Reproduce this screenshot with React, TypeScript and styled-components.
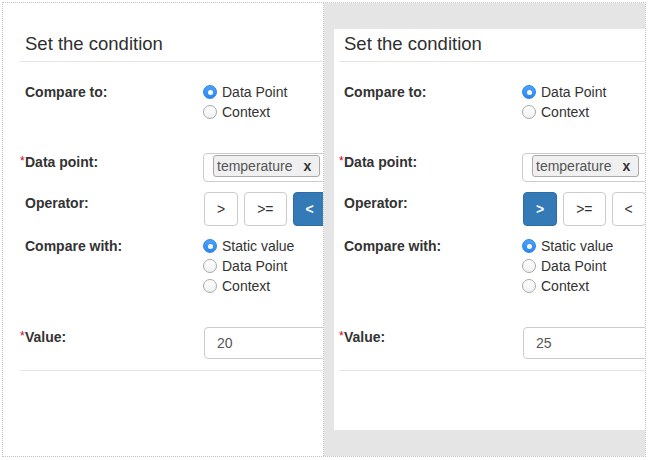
import styled, { createGlobalStyle } from "styled-components";

const GlobalStyle = createGlobalStyle`
  html, body {
    margin: 0;
    padding: 0;
    background: #ffffff;
  }

  body {
    font-family: "Liberation Sans", Arial, sans-serif;
    font-size: 14px;
    color: #333333;
  }
`;

const Frame = styled.div`
  margin: 2px 0 0 2px;
  width: 644px;
  height: 455px;
  box-sizing: border-box;
  border: 1px dotted #c4c4c4;
  display: grid;
  grid-template-columns: 321px 321px;
`;

type PaneProps = {
  $shaded?: boolean;
};

const Pane = styled.div<PaneProps>`
  box-sizing: border-box;
  overflow: hidden;
  padding: 26px 0 0 ${(p) => (p.$shaded ? 10 : 12)}px;
  background: ${(p) => (p.$shaded ? "#e5e5e5" : "#ffffff")};
  border-right: ${(p) => (p.$shaded ? "none" : "1px dotted #c4c4c4")};
`;

const Card = styled.div`
  width: 420px;
  height: 401px;
  background: #ffffff;
`;

const Header = styled.h4`
  margin: 0 5px;
  padding: 5px 5px 7px;
  font-size: 18.5px;
  line-height: 20px;
  font-weight: normal;
  color: #2f2f2f;
  border-bottom: 1px solid #e5e5e5;
`;

const Body = styled.div`
  padding: 20px 0 0 10px;
`;

type RowProps = {
  $mt?: number;
};

const Row = styled.div<RowProps>`
  display: grid;
  grid-template-columns: 178px 1fr;
  align-items: start;
  margin-top: ${(p) => p.$mt ?? 0}px;
`;

type LabelProps = {
  $pt?: number;
};

const Label = styled.label<LabelProps>`
  position: relative;
  font-weight: bold;
  line-height: 20px;
  padding-top: ${(p) => p.$pt ?? 0}px;
  color: #333333;
`;

const Required = styled.span`
  position: absolute;
  left: -5px;
  top: -1px;
  font-size: 12px;
  font-weight: normal;
  color: #d0021b;
`;

const RadioGroup = styled.div`
  display: flex;
  flex-direction: column;
`;

const RadioOption = styled.div`
  display: flex;
  align-items: center;
  gap: 5px;
  height: 20px;
  line-height: 20px;
  white-space: nowrap;
`;

type DotProps = {
  $checked?: boolean;
};

const RadioDot = styled.span<DotProps>`
  width: 14px;
  height: 14px;
  box-sizing: border-box;
  border-radius: 50%;
  display: flex;
  align-items: center;
  justify-content: center;
  background: ${(p) =>
    p.$checked ? "linear-gradient(#4da3f8, #2c86f2)" : "linear-gradient(#ffffff, #f1f1f1)"};
  border: 1px solid ${(p) => (p.$checked ? "#2d84ea" : "#a9a9a9")};

  &::after {
    content: "";
    display: ${(p) => (p.$checked ? "block" : "none")};
    width: 5px;
    height: 5px;
    border-radius: 50%;
    background: #ffffff;
  }
`;

const TagBox = styled.div`
  margin-top: 1px;
  width: 200px;
  height: 29px;
  box-sizing: border-box;
  padding: 1px 0 0 9px;
  border: 1px solid #cccccc;
  border-radius: 4px;
  background: #ffffff;
`;

const Tag = styled.span`
  display: inline-flex;
  align-items: center;
  gap: 11px;
  height: 22px;
  box-sizing: border-box;
  padding: 0 8px 0 3px;
  border: 1px solid #aaaaaa;
  border-radius: 3px;
  background: #f0f0f0;
  color: #555555;
  white-space: nowrap;
`;

const TagClose = styled.span`
  font-weight: bold;
  color: #333333;
`;

const ButtonGroup = styled.div`
  display: flex;
  gap: 6px;
  margin-left: 1px;
`;

type OpButtonProps = {
  $active?: boolean;
};

const OpButton = styled.button<OpButtonProps>`
  height: 34px;
  padding: 0 12px;
  border-radius: 4px;
  font-family: inherit;
  font-size: 14px;
  flex-shrink: 0;
  border: 1px solid ${(p) => (p.$active ? "#2e6da4" : "#cccccc")};
  background: ${(p) => (p.$active ? "#337ab7" : "#ffffff")};
  color: ${(p) => (p.$active ? "#ffffff" : "#333333")};
  font-weight: ${(p) => (p.$active ? "bold" : "normal")};
`;

const TextInput = styled.input`
  margin-left: 1px;
  width: 200px;
  height: 32px;
  box-sizing: border-box;
  padding: 0 12px;
  border: 1px solid #cccccc;
  border-radius: 4px;
  font-family: inherit;
  font-size: 14px;
  color: #555555;
  outline: none;
`;

const Divider = styled.div`
  margin: 11px 5px 0;
  border-top: 1px solid #e5e5e5;
`;

type RadioListProps = {
  options: string[];
  selected: string;
};

const RadioList = ({ options, selected }: RadioListProps) => (
  <RadioGroup>
    {options.map((o) => (
      <RadioOption key={o}>
        <RadioDot $checked={o === selected} />
        {o}
      </RadioOption>
    ))}
  </RadioGroup>
);

type ConditionProps = {
  op: string;
  value: string;
};

const operators = [">", ">=", "<"];

const ConditionCard = ({ op, value }: ConditionProps) => (
  <Card>
    <Header>Set the condition</Header>
    <Body>
      <Row>
        <Label>Compare to:</Label>
        <RadioList options={["Data Point", "Context"]} selected="Data Point" />
      </Row>
      <Row $mt={30}>
        <Label>
          <Required>*</Required>Data point:
        </Label>
        <TagBox>
          <Tag>
            temperature
            <TagClose>x</TagClose>
          </Tag>
        </TagBox>
      </Row>
      <Row $mt={10}>
        <Label $pt={1}>Operator:</Label>
        <ButtonGroup>
          {operators.map((o) => (
            <OpButton key={o} $active={o === op}>
              {o}
            </OpButton>
          ))}
        </ButtonGroup>
      </Row>
      <Row $mt={10}>
        <Label>Compare with:</Label>
        <RadioList
          options={["Static value", "Data Point", "Context"]}
          selected="Static value"
        />
      </Row>
      <Row $mt={31}>
        <Label>
          <Required>*</Required>Value:
        </Label>
        <TextInput readOnly value={value} />
      </Row>
    </Body>
    <Divider />
  </Card>
);

const App = () => {
  return (
    <>
      <GlobalStyle />
      <Frame>
        <Pane>
          <ConditionCard op="<" value="20" />
        </Pane>
        <Pane $shaded>
          <ConditionCard op=">" value="25" />
        </Pane>
      </Frame>
    </>
  );
};

export default App;
